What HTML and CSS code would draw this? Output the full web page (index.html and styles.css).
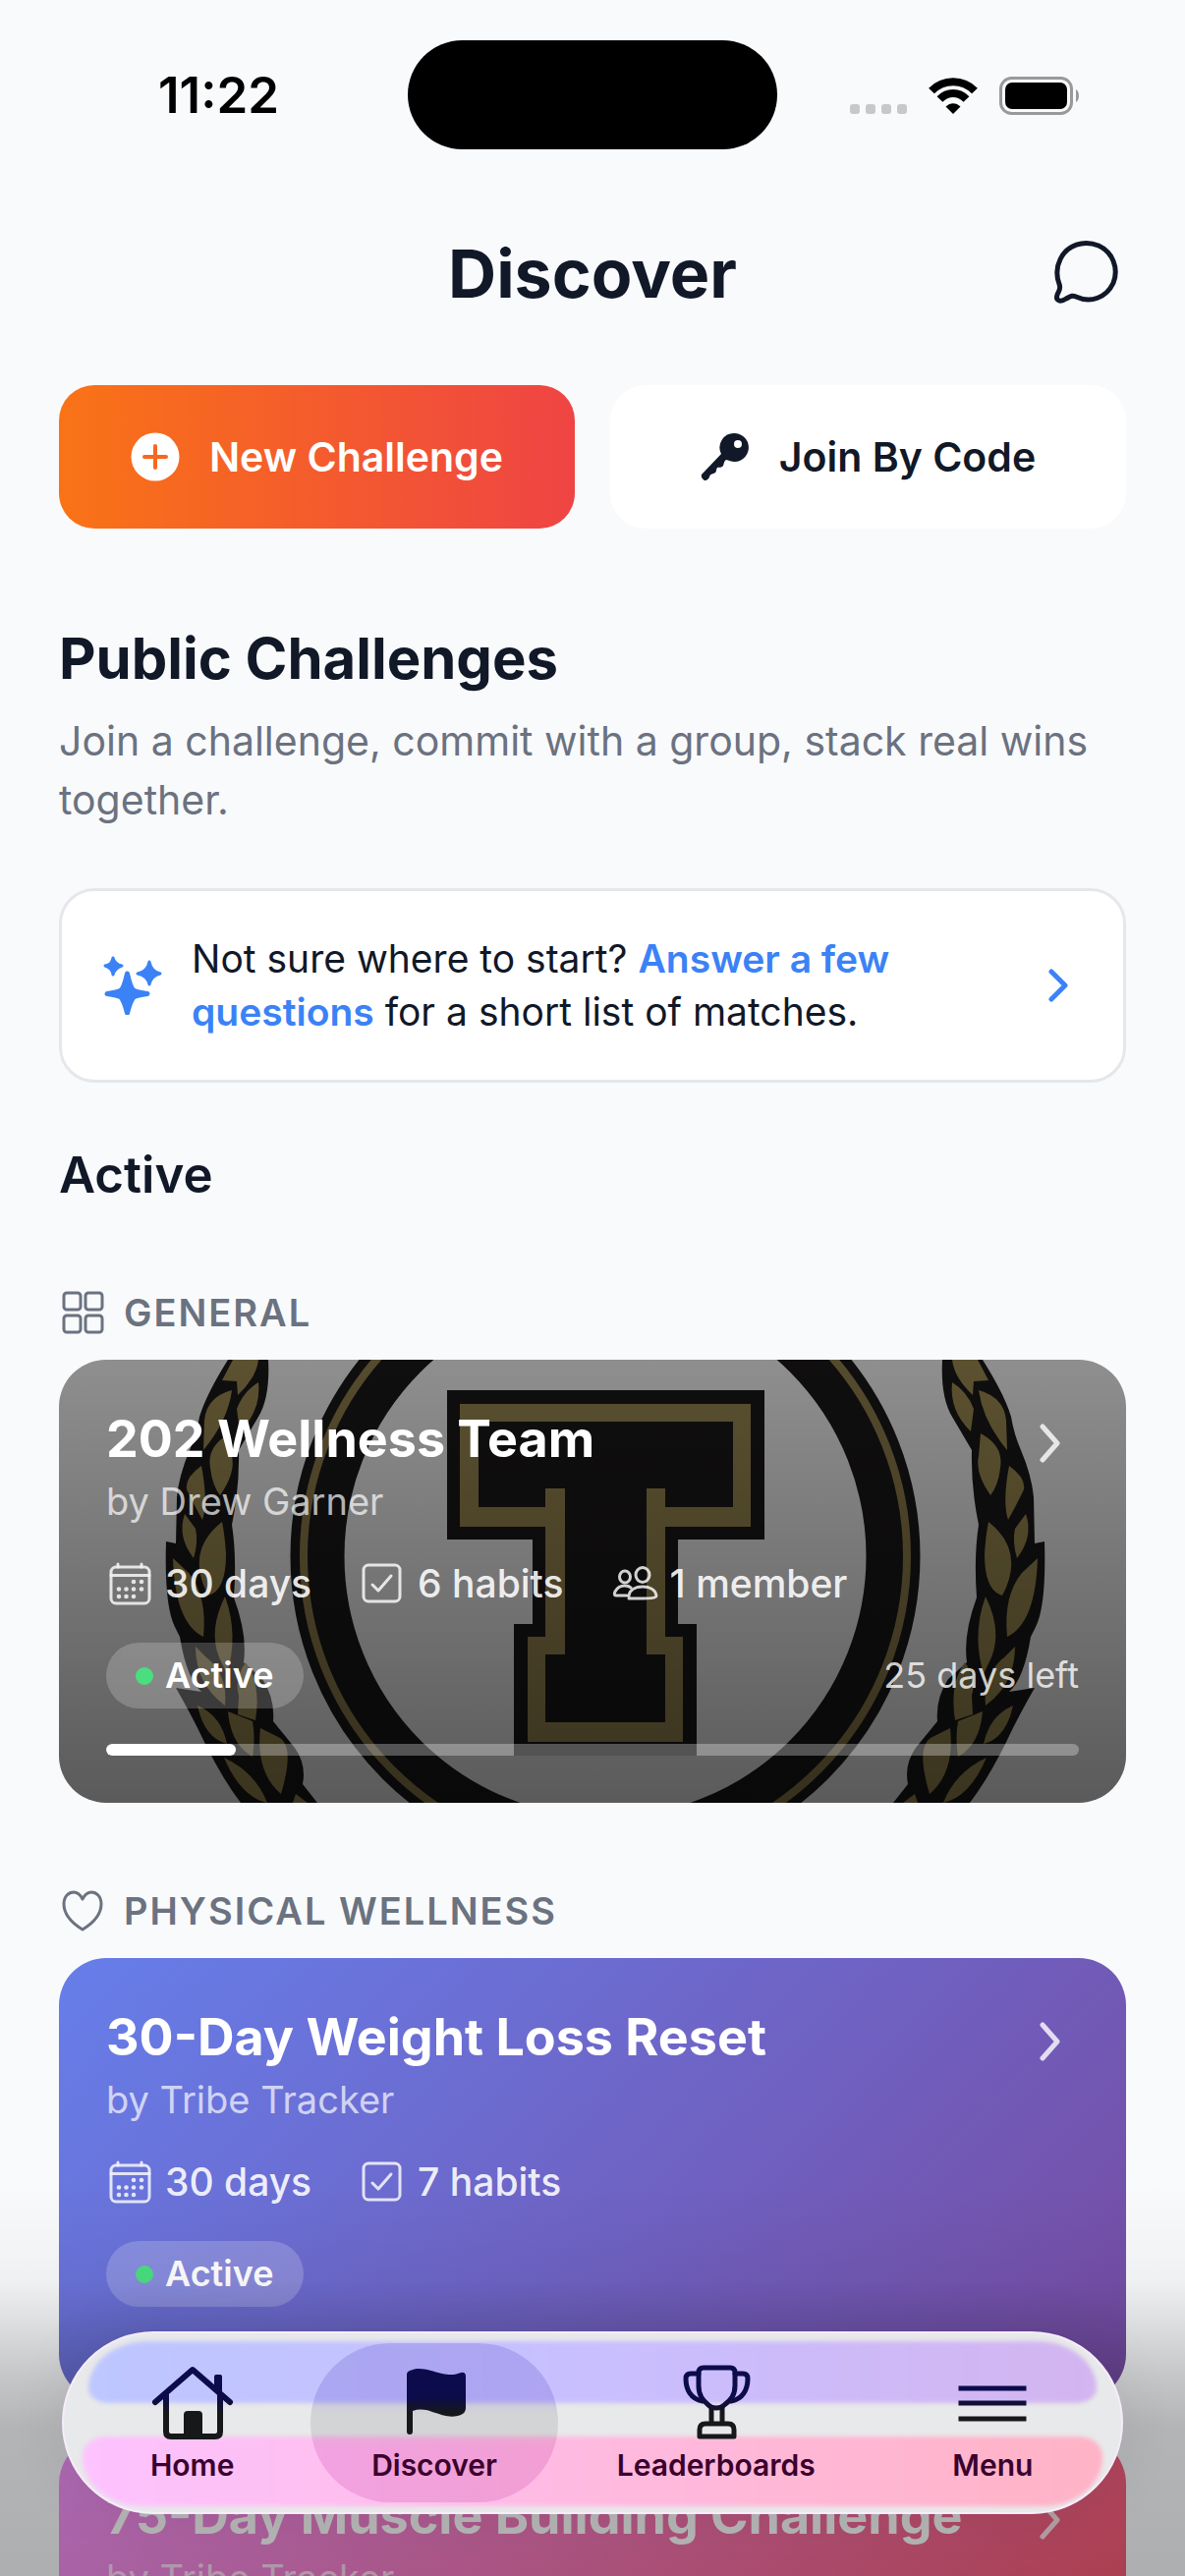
FILE: index.html
```html
<!DOCTYPE html>
<html lang="en">
<head>
  <meta charset="UTF-8" />
  <meta name="viewport" content="width=device-width, initial-scale=1.0" />
  <title>Discover</title>
  <link rel="stylesheet" href="styles.css">
</head>
<body>
  <!-- shared icons -->
  <svg class="sprite" aria-hidden="true">
    <defs>
      <linearGradient id="ink" gradientUnits="userSpaceOnUse" x1="0" y1="0" x2="0" y2="84">
        <stop offset="0.45" stop-color="#0c0b4b" />
        <stop offset="0.65" stop-color="#17181a" />
      </linearGradient>
      <symbol id="i-chevron" viewBox="0 0 60 66">
        <path d="M23 20 L38 37 L23 54" fill="none" stroke="currentColor" stroke-width="5" stroke-linecap="round" stroke-linejoin="round" />
      </symbol>
      <symbol id="i-calendar" viewBox="0 0 48 48">
        <g fill="none" stroke="currentColor" stroke-width="3" stroke-linecap="round">
          <rect x="5" y="7" width="39" height="37" rx="5" />
          <path d="M5 15.500H44M12 4V7M36 4V7" />
        </g>
        <g fill="currentColor">
          <circle cx="28" cy="22" r="2.300" /><circle cx="36" cy="22" r="2.300" />
          <circle cx="13" cy="29.500" r="2.300" /><circle cx="20.500" cy="29.500" r="2.300" /><circle cx="28" cy="29.500" r="2.300" /><circle cx="36" cy="29.500" r="2.300" />
          <circle cx="13" cy="37" r="2.300" /><circle cx="20.500" cy="37" r="2.300" /><circle cx="28" cy="37" r="2.300" />
        </g>
      </symbol>
      <symbol id="i-check" viewBox="0 0 48 48">
        <g fill="none" stroke="currentColor" stroke-width="3" stroke-linecap="round" stroke-linejoin="round">
          <rect x="5" y="5" width="37" height="37" rx="5" />
          <path d="M14 25 L20 31 L33 16" />
        </g>
      </symbol>
      <symbol id="i-people" viewBox="0 0 48 48">
        <g fill="none" stroke="currentColor" stroke-width="3" stroke-linecap="round" stroke-linejoin="round">
          <ellipse cx="14" cy="17" rx="5.500" ry="6" />
          <ellipse cx="32" cy="15" rx="7" ry="7.500" />
          <path d="M18 39H32C37 39 46 39 46 36C45 30 39 27 32 27C25 27 19 30 18 36C18 38 18 39 19 39Z" />
          <path d="M16 36H5C3 36 3 34 4 32C6 28 10 26 14 26C17 26 19 27 20 28" />
        </g>
      </symbol>
    </defs>
  </svg>

  <div class="app">
    <div class="status-bar">
      <span class="time">11:22</span>
      <span class="island"></span>
      <span class="indicators">
        <svg width="58" height="40" viewBox="0 0 58 40" fill="#c7c8ca">
          <rect x="0" y="28" width="10" height="10" rx="3" /><rect x="16" y="28" width="10" height="10" rx="3" />
          <rect x="32" y="28" width="10" height="10" rx="3" /><rect x="48" y="28" width="10" height="10" rx="3" />
        </svg>
        <svg width="50" height="40" viewBox="0 0 50 40" fill="none" stroke="#000" stroke-width="8">
          <path d="M3 14.500C15 2 35 2 47 14.500" />
          <path d="M11.500 23C19 15 31 15 38.500 23" />
          <path d="M25 38L17.500 30.500C22 26 28 26 32.500 30.500Z" fill="#000" stroke="none" />
        </svg>
        <svg width="82" height="40" viewBox="0 0 82 40">
          <rect x="1.500" y="1.500" width="72" height="36" rx="11" fill="none" stroke="#98999b" stroke-width="3" />
          <rect x="6" y="6" width="63" height="27" rx="7" />
          <path d="M78 13C82 15 82 24 78 26Z" fill="#98999b" />
        </svg>
      </span>
    </div>

    <header class="header">
      <h1>Discover</h1>
      <button class="chat" aria-label="Messages">
        <svg width="78" height="78" viewBox="0 0 78 78" fill="none" stroke="currentColor" stroke-width="5" stroke-linejoin="round">
          <path d="M10 50C7 43 7 33 11 25C18 10 35 5 50 11C64 17 71 34 65 49C58 64 42 70 27 63C23 61 21 63 17 65C11 69 6 67 8 61C10 56 12 55 10 50Z" />
        </svg>
      </button>
    </header>

    <main>
      <div class="actions">
        <button class="btn btn-primary">
          <svg width="50" height="50" viewBox="0 0 50 50">
            <circle cx="25" cy="25" r="24.500" fill="#fff" />
            <path d="M25 14V36M14 25H36" stroke="#f7681f" stroke-width="4" stroke-linecap="round" />
          </svg>
          New Challenge
        </button>
        <button class="btn">
          <svg width="50" height="50" viewBox="0 0 50 50" fill="currentColor">
            <path fill-rule="evenodd" d="M35 1A14.500 14.500 0 1 1 28 28.500L26 28C24 29 24 31 23 34C20 37 18 35 17 36C15 39 17 41 13 42C9 43 10 44 9 45C9 47 6 49 5 49C3 49 0 46 1 43L21 22A14.500 14.500 0 0 1 35 1ZM38 8A4 4 0 1 0 38 16A4 4 0 1 0 38 8Z" />
          </svg>
          Join By Code
        </button>
      </div>

      <h2>Public Challenges</h2>
      <p class="lead">Join a challenge, commit with a group, stack real wins together.</p>

      <a class="quiz" href="#">
        <svg width="60" height="60" viewBox="0 0 60 60" fill="currentColor" stroke="currentColor" stroke-width="3" stroke-linejoin="round">
          <path d="M10 2Q12 9 19 10Q12 12 10 19Q9 12 2 10Q9 9 10 2Z" />
          <path d="M47 6Q49 16 58 18Q49 20 47 29Q45 20 35 18Q45 16 47 6Z" />
          <path stroke-width="5" d="M24.500 18Q28 33 31 35Q34 37 45 38.500Q34 40 31 42Q28 45 24.500 58Q21 45 18 42Q15 40 4 38.500Q15 37 18 35Q21 33 24.500 18Z" />
        </svg>
        <span class="quiz-text">Not sure where to start? <strong>Answer a few questions</strong> for a short list of matches.</span>
        <svg width="48" height="48" viewBox="0 0 48 48" fill="none" stroke="currentColor" stroke-width="5" stroke-linecap="round" stroke-linejoin="round">
          <path d="M17 10L31 24L17 38" />
        </svg>
      </a>

      <h3>Active</h3>

      <section>
        <h4 class="category">
          <svg width="48" height="48" viewBox="0 0 48 48" fill="none" stroke="currentColor" stroke-width="3">
            <rect x="5" y="4" width="17" height="17" rx="3" /><rect x="27" y="4" width="17" height="17" rx="3" />
            <rect x="5" y="27" width="17" height="17" rx="3" /><rect x="27" y="27" width="17" height="17" rx="3" />
          </svg>
          GENERAL
        </h4>
        <a class="card card-team" href="#">
          <svg class="cover" viewBox="0 0 1086 451" preserveAspectRatio="xMidYMid slice" aria-hidden="true">
            <rect width="1086" height="451" fill="#d2d2d2" />
            <circle cx="556" cy="200" r="293" fill="none" stroke="#171516" stroke-width="55" />
            <circle cx="556" cy="200" r="307" fill="none" stroke="#7d6e43" stroke-width="8" />
            <path fill="#171516" d="M395 31H718V183H630V269H649V403H463V269H482V183H395Z" />
            <path fill="#857647" d="M408 45H704V170H617V282H635V389H477V282H495V170H408Z" />
            <path fill="#171516" d="M427 63H686V150H617V131H598V300H617V369H495V300H515V131H495V150H427Z" />
            <g id="wreath">
              <path fill="#171516" d="M172 0Q150 35 143 58Q140 76 133 92Q122 118 120 140L119 187L109 185Q107 250 118 272L123 282Q130 325 145 338L119 334Q135 362 145 383Q165 425 185 451H263L248 432Q252 412 240 395L218 368Q220 345 207 325L188 308Q192 280 178 242Q181 200 176 168Q184 130 183 92L203 58Q215 38 213 0Z" />
              <g fill="#877847">
                <path d="M177 0H203Q201 18 182 36L181 22L166 21Z" />
                <path d="M176 31Q150 38 148 62L147 92Q172 62 176 31Z" />
                <path d="M203 23Q188 32 181 50L184 73Q206 52 203 23Z" />
                <path d="M174 75Q150 88 154 110Q156 128 164 138Q180 115 176 98Z" />
                <path d="M145 108Q128 120 130 132Q136 145 146 163Q152 145 145 108Z" />
                <path d="M128 157Q120 180 137 202Q142 185 139 172Z" />
                <path d="M166 165Q128 195 152 240Q170 235 170 198Q169 180 166 165Z" />
                <path d="M116 202Q118 268 147 282Q151 240 132 217Z" />
                <path d="M169 241Q152 275 163 303L171 320Q183 280 169 241Z" />
                <path d="M139 292Q139 330 169 352Q172 320 150 303Z" />
                <path d="M190 308Q178 325 183 342L182 361L200 367Q206 330 190 308Z" />
                <path d="M141 352Q148 385 171 391Q165 362 141 352Z" />
                <path d="M172 358Q175 392 197 404Q200 385 197 368Z" />
                <path d="M205 375Q200 420 226 442Q240 395 225 385Z" />
                <path d="M168 405Q185 445 212 451Q200 420 168 405Z" />
                <path d="M241 442L238 451H253Z" />
              </g>
            </g>
            <use href="#wreath" transform="translate(1112 0) scale(-1 1)" />
          </svg>
          <div class="card-body">
            <div class="card-head">
              <h5>202 Wellness Team</h5>
              <svg class="chevron"><use href="#i-chevron" /></svg>
            </div>
            <p class="author">by Drew Garner</p>
            <ul class="stats">
              <li><svg><use href="#i-calendar" /></svg>30 days</li>
              <li><svg><use href="#i-check" /></svg>6 habits</li>
              <li><svg><use href="#i-people" /></svg>1 member</li>
            </ul>
            <div class="state">
              <span class="badge">Active</span>
              <span class="remaining">25 days left</span>
            </div>
            <div class="progress"><div class="progress-fill" style="width: 13.33%"></div></div>
          </div>
        </a>
      </section>

      <section>
        <h4 class="category">
          <svg width="48" height="48" viewBox="0 0 48 48" fill="none" stroke="currentColor" stroke-width="3" stroke-linejoin="round">
            <path d="M24 43C11 35 5 27 5 17C5 9 10 5 15 5C20 5 22 8 24 12C26 8 28 5 33 5C38 5 43 9 43 17C43 27 37 35 24 43Z" />
          </svg>
          PHYSICAL WELLNESS
        </h4>
        <div class="card-list">
          <a class="card card-violet" href="#">
            <div class="card-body">
              <div class="card-head">
                <h5>30-Day Weight Loss Reset</h5>
                <svg class="chevron"><use href="#i-chevron" /></svg>
              </div>
              <p class="author">by Tribe Tracker</p>
              <ul class="stats">
                <li><svg><use href="#i-calendar" /></svg>30 days</li>
                <li><svg><use href="#i-check" /></svg>7 habits</li>
              </ul>
              <div class="state"><span class="badge">Active</span></div>
              <div class="progress"></div>
            </div>
          </a>
          <a class="card card-pink" href="#">
            <div class="card-body">
              <div class="card-head">
                <h5>75-Day Muscle Building Challenge</h5>
                <svg class="chevron"><use href="#i-chevron" /></svg>
              </div>
              <p class="author">by Tribe Tracker</p>
            </div>
          </a>
        </div>
      </section>
    </main>

    <div class="shade"></div>

    <nav class="tabs">
      <a class="tab" href="#">
        <svg width="84" height="84" viewBox="0 0 84 84" fill="none" stroke="url(#ink)" stroke-width="6" stroke-linecap="round" stroke-linejoin="round">
          <path d="M4 43L42 10L80 43" />
          <path d="M15 36V73Q15 78 20 78H65Q70 78 70 73V36" />
          <path d="M33 77V56Q33 52 37 52H48Q52 52 52 56V77Z" fill="url(#ink)" stroke="none" />
          <path d="M64 28V17Q64 15 66 15H70Q72 15 72 17V36Z" fill="url(#ink)" stroke="none" />
        </svg>
        Home
      </a>
      <a class="tab tab-current" href="#" aria-current="page">
        <svg width="84" height="84" viewBox="0 0 84 84" fill="url(#ink)">
          <path d="M14 15Q14 12 17 11C27 6 38 11 50 14C59 16 64 15 69 13Q74 12 74 17V49Q74 54 69 56C59 60 50 56 40 53C32 50 26 50 20 52V73Q20 76 17 76Q14 76 14 73Z" />
        </svg>
        Discover
      </a>
      <a class="tab" href="#">
        <svg width="84" height="84" viewBox="0 0 84 84" fill="none" stroke="url(#ink)" stroke-width="5" stroke-linecap="round" stroke-linejoin="round">
          <path d="M24 13Q24 8 29 8H56Q61 8 61 13V26C61 36 57 41 50 46Q47 49 42 49Q37 49 34 46C28 41 24 36 24 26Z" />
          <path d="M24 14H16Q11 14 11 19C11 30 16 40 28 42" />
          <path d="M61 14H69Q74 14 74 19C74 30 69 40 57 42" />
          <path d="M37 49V64M48 49V64" />
          <path d="M25 71Q25 65 31 65H54Q60 65 60 71V78H25Z" />
        </svg>
        Leaderboards
      </a>
      <a class="tab" href="#">
        <svg width="84" height="84" viewBox="0 0 84 84" fill="none" stroke="url(#ink)" stroke-width="5" stroke-linecap="round">
          <path d="M10 29H74V29.100H10ZM10 44H74V44.100H10ZM10 60H74V60.100H10Z" />
        </svg>
        Menu
      </a>
    </nav>
  </div>
</body>
</html>
```

FILE: styles.css
```css
* {
  box-sizing: border-box;
  margin: 0;
  padding: 0;
}
body {
  font-family: Inter, "Noto Sans", sans-serif;
  background-color: #f9fafc;
  color: #111827;
}
a {
  color: inherit;
  text-decoration: none;
}
button {
  font: inherit;
  color: inherit;
  background: none;
  border: none;
  cursor: pointer;
}
svg {
  flex: none;
}
.sprite {
  position: absolute;
  width: 0;
  height: 0;
}
.app {
  position: relative;
  height: 100vh;
  overflow: hidden;
}

/* status bar */
.status-bar {
  display: grid;
  grid-template-columns: 1fr auto 1fr;
  align-items: center;
  padding-top: 41px;
  color: #000;
}
.time {
  justify-self: center;
  padding-left: 30px;
  font-size: 51px;
  font-weight: 600;
  line-height: 60px;
}
.island {
  width: 376px;
  height: 111px;
  border-radius: 56px;
  background: #000;
}
.indicators {
  display: flex;
  justify-self: center;
  gap: 22px;
  padding: 2px 34px 0 0;
}

/* page header */
.header {
  display: grid;
  grid-template-columns: 1fr auto 1fr;
  align-items: center;
  padding: 84px 60px 72px;
}
.header h1 {
  grid-column: 2;
  font-size: 68px;
  font-weight: 700;
  line-height: 84px;
}
.chat {
  justify-self: end;
  height: 78px;
}

main {
  padding: 0 60px;
}
.actions {
  display: grid;
  grid-template-columns: 1fr 1fr;
  gap: 36px;
}
.btn {
  display: flex;
  align-items: center;
  justify-content: center;
  gap: 30px;
  height: 146px;
  border-radius: 36px;
  background: #fff;
  font-size: 41px;
  font-weight: 600;
}
.btn-primary {
  color: #fff;
  background: linear-gradient(90deg, #f97316, #ef4444);
}
h2 {
  margin-top: 96px;
  font-size: 58px;
  font-weight: 700;
  line-height: 72px;
}
.lead {
  margin-top: 18px;
  font-size: 41px;
  line-height: 60px;
  color: #6b7280;
}
.quiz {
  display: flex;
  align-items: center;
  gap: 30px;
  margin-top: 60px;
  padding: 42px;
  border: 3px solid #e5e7eb;
  border-radius: 36px;
  background: #fff;
  color: #3b82f6;
  font-size: 39px;
  line-height: 54px;
}
.quiz-text {
  flex: 1;
  color: #111827;
}
.quiz strong {
  font-weight: 600;
  color: #3b82f6;
}
h3 {
  margin-top: 64px;
  font-size: 51px;
  font-weight: 600;
  line-height: 60px;
}
.category {
  display: flex;
  align-items: center;
  gap: 18px;
  margin: 86px 0 24px;
  font-size: 38px;
  font-weight: 600;
  line-height: 48px;
  letter-spacing: 2px;
  color: #6b7280;
}

/* challenge cards */
.card-list {
  display: flex;
  flex-direction: column;
  gap: 36px;
}
.card {
  display: block;
  position: relative;
  isolation: isolate;
  overflow: hidden;
  border-radius: 48px;
  color: #fff;
}
.card-team::before {
  content: "";
  position: absolute;
  inset: 0;
  z-index: 1;
  background: linear-gradient(rgba(0, 0, 0, 0.32), rgba(0, 0, 0, 0.57));
}
.card-violet {
  background: linear-gradient(135deg, #667eea, #764ba2);
}
.card-pink {
  background: linear-gradient(135deg, #f093fb, #f5576c);
}
.cover {
  position: absolute;
  inset: 0;
  width: 100%;
  height: 100%;
}
.card-body {
  position: relative;
  z-index: 2;
  padding: 48px;
}
.card-head {
  display: flex;
  justify-content: space-between;
}
.card h5 {
  font-size: 52px;
  font-weight: 700;
  line-height: 66px;
}
.chevron {
  width: 60px;
  height: 66px;
  opacity: 0.8;
}
.author {
  margin-top: 6px;
  font-size: 38px;
  line-height: 48px;
  color: rgba(255, 255, 255, 0.7);
}
.stats {
  display: flex;
  gap: 48px;
  margin-top: 36px;
  list-style: none;
  font-size: 39px;
  font-weight: 500;
  line-height: 48px;
  color: rgba(255, 255, 255, 0.9);
}
.stats li {
  display: flex;
  gap: 12px;
}
.stats svg {
  width: 48px;
  height: 48px;
  opacity: 0.9;
}
.state {
  display: flex;
  align-items: center;
  justify-content: space-between;
  margin-top: 36px;
  font-size: 36px;
  line-height: 43px;
}
.badge {
  display: flex;
  align-items: center;
  gap: 12px;
  padding: 12px 30px;
  border-radius: 36px;
  background: rgba(255, 255, 255, 0.2);
  font-weight: 600;
}
.badge::before {
  content: "";
  width: 18px;
  height: 18px;
  border-radius: 50%;
  background: #4ade80;
}
.remaining {
  color: rgba(255, 255, 255, 0.8);
}
.progress {
  height: 12px;
  margin-top: 36px;
  border-radius: 6px;
  background: rgba(255, 255, 255, 0.3);
  overflow: hidden;
}
.progress-fill {
  height: 100%;
  border-radius: 6px;
  background: #fff;
}

/* floating tab bar */
.shade {
  position: absolute;
  inset: auto 0 0;
  height: 400px;
  background: linear-gradient(transparent, rgba(0, 0, 0, 0.04) 25%, rgba(0, 0, 0, 0.2) 48%, rgba(0, 0, 0, 0.28) 62%, rgba(0, 0, 0, 0.3));
  pointer-events: none;
}
.tabs {
  position: absolute;
  inset: auto 63px 63px;
  display: grid;
  grid-template-columns: 24fr 25fr 32fr 24fr;
  padding: 10px;
  border: 2px solid #f6ecfa;
  border-radius: 93px;
  background: #e8e9ea;
  box-shadow: 0 0 60px rgba(0, 0, 0, 0.08);
  overflow: hidden;
}
.tabs::before,
.tabs::after {
  content: "";
  position: absolute;
  filter: blur(2px);
}
.tabs::before {
  inset: 8px 25px auto;
  height: 63px;
  border-radius: 60px 60px 20px 20px / 48px 48px 15px 15px;
  background: linear-gradient(90deg, #bec7ff, #c9bfff 50%, #d3b5f0);
}
.tabs::after {
  inset: auto 19px 6px;
  height: 71px;
  border-radius: 24px 24px 60px 60px / 20px 20px 50px 50px;
  background: linear-gradient(90deg, #fdc3ff, #ffbae0 50%, #ffb3c6);
}
.tab {
  position: relative;
  z-index: 1;
  display: flex;
  flex-direction: column;
  align-items: center;
  gap: 3px;
  padding: 17px 0 18px;
  font-size: 30px;
  font-weight: 600;
  line-height: 40px;
  color: #3a002e;
}
.tab-current {
  border-radius: 81px;
  background: linear-gradient(rgba(60, 40, 180, 0.18) 34%, rgba(0, 0, 0, 0.09) 45%, rgba(0, 0, 0, 0.09) 56%, rgba(180, 20, 140, 0.17) 66%);
}
```
